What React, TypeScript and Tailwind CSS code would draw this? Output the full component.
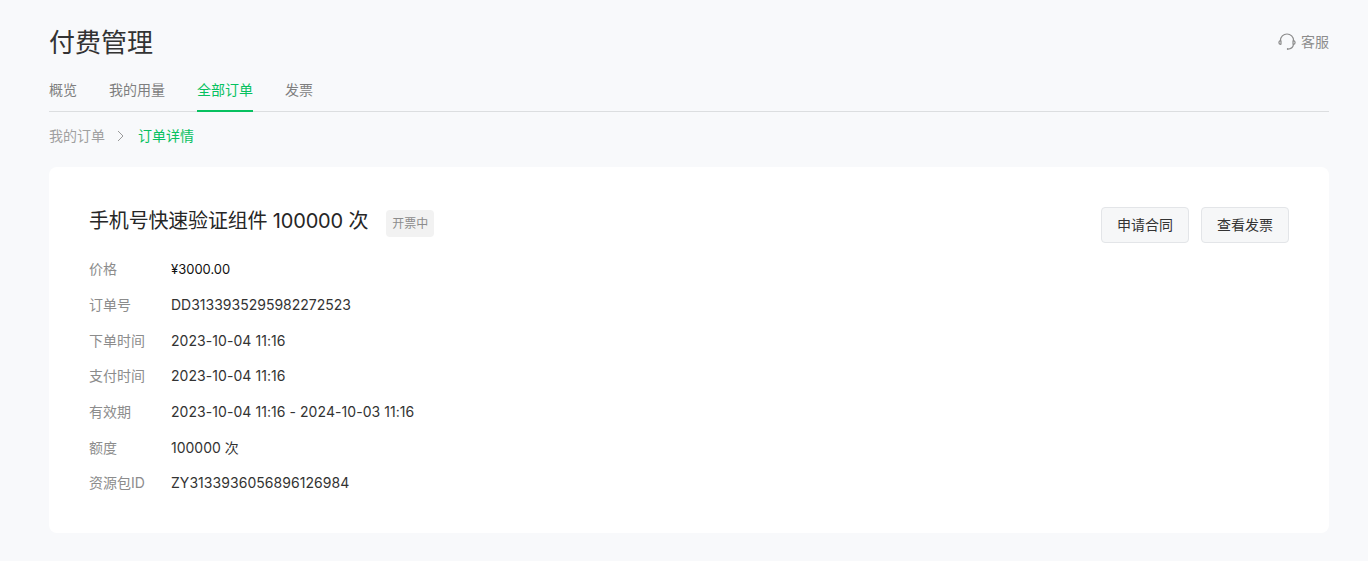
const rows = [
  { label: "价格", value: "¥3000.00", valueClass: "text-[13px] text-[#111111]" },
  { label: "订单号", value: "DD3133935295982272523", valueClass: "text-[#333333]" },
  { label: "下单时间", value: "2023-10-04 11:16", valueClass: "tracking-[0.06px] text-[#333333]" },
  { label: "支付时间", value: "2023-10-04 11:16", valueClass: "tracking-[0.06px] text-[#333333]" },
  { label: "有效期", value: "2023-10-04 11:16 - 2024-10-03 11:16", valueClass: "tracking-[0.06px] text-[#333333]" },
  { label: "额度", value: "100000 次", valueClass: "text-[#333333]" },
  { label: "资源包ID", value: "ZY3133936056896126984", valueClass: "tracking-[0.05px] text-[#333333]" },
];

function HeadsetIcon() {
  return (
    <svg width="18" height="18" viewBox="0 0 18 18" fill="none" stroke="#8c8c8c" strokeWidth="1.2" strokeLinecap="round">
      <path d="M2.4 7.6a6.6 6.6 0 0 1 13.2 0" />
      <path d="M2.4 7.6C1.4 8 .9 8.7.9 9.6s.6 1.7 1.6 1.9c.4 0 .5-.2.5-.5V8c0-.3-.2-.5-.6-.4z" />
      <path d="M15.6 7.6c1 .4 1.5 1.1 1.5 2s-.6 1.7-1.6 1.9c-.4 0-.5-.2-.5-.5V8c0-.3.2-.5.6-.4z" />
      <path d="M15.4 11.6c-.3 2.4-2 3.9-4.4 4.4" />
      <circle cx="9.8" cy="16.1" r="1" fill="#8c8c8c" stroke="none" />
    </svg>
  );
}

export default function App() {
  return (
    <div className="min-h-[561px] bg-[#f8f9fb] pl-[49px] pr-[39px] pt-[23px] font-['Inter','Noto_Sans_CJK_SC',sans-serif]">
      {/* 标题 */}
      <div className="flex items-center justify-between h-10">
        <h1 className="text-[26px] leading-10 font-normal text-[#333333]">付费管理</h1>
        <div className="flex items-center gap-[5px] -mt-[2px] text-sm text-[#8c8c8c]">
          <HeadsetIcon />
          <span>客服</span>
        </div>
      </div>

      {/* 标签 */}
      <div className="flex gap-8 mt-[5px] border-b border-[#dcdee0] h-[44px] text-sm">
        <a className="h-[44px] leading-[44px] text-[#7f7f7f]">概览</a>
        <a className="h-[44px] leading-[44px] text-[#7f7f7f]">我的用量</a>
        <a className="h-[44px] leading-[44px] text-[#07c160] border-b-2 border-[#07c160]">全部订单</a>
        <a className="h-[44px] leading-[44px] text-[#7f7f7f]">发票</a>
      </div>

      {/* 面包屑 */}
      <div className="flex items-center h-[22px] mt-[13px] text-sm">
        <span className="text-[#a0a0a0]">我的订单</span>
        <svg className="ml-[10px] mr-[11px]" width="12" height="12" viewBox="0 0 12 12" fill="none" stroke="#9a9a9a" strokeWidth="1">
          <path d="M3 1 8 6l-5 5" />
        </svg>
        <span className="text-[#07c160]">订单详情</span>
      </div>

      {/* 详情卡片 */}
      <div className="mt-5 bg-white rounded-lg px-10 pt-10 pb-8">
        <div className="flex justify-between">
          <div className="flex items-start h-[27px] mt-[3px] self-start">
            <h2 className="text-xl leading-[22px] font-normal tracking-[-0.18px] text-[#262626]">手机号快速验证组件 100000 次</h2>
            <span className="ml-[18px] px-[6px] h-[27px] leading-[27px] rounded-sm bg-[#f2f2f2] text-xs text-[#8c8c8c]">开票中</span>
          </div>
          <div className="flex gap-3">
            <button className="w-[88px] h-9 rounded border border-[#e3e5e8] bg-[#f6f7f8] text-sm text-[#333333]">申请合同</button>
            <button className="w-[88px] h-9 rounded border border-[#e3e5e8] bg-[#f6f7f8] text-sm text-[#333333]">查看发票</button>
          </div>
        </div>

        <div className="mt-[8.4px]">
          {rows.map((row) => (
            <div key={row.label} className="flex h-[35.67px] items-center text-sm">
              <span className="w-[82px] text-[#8c8c8c]">{row.label}</span>
              <span className={row.valueClass}>{row.value}</span>
            </div>
          ))}
        </div>
      </div>
    </div>
  );
}
